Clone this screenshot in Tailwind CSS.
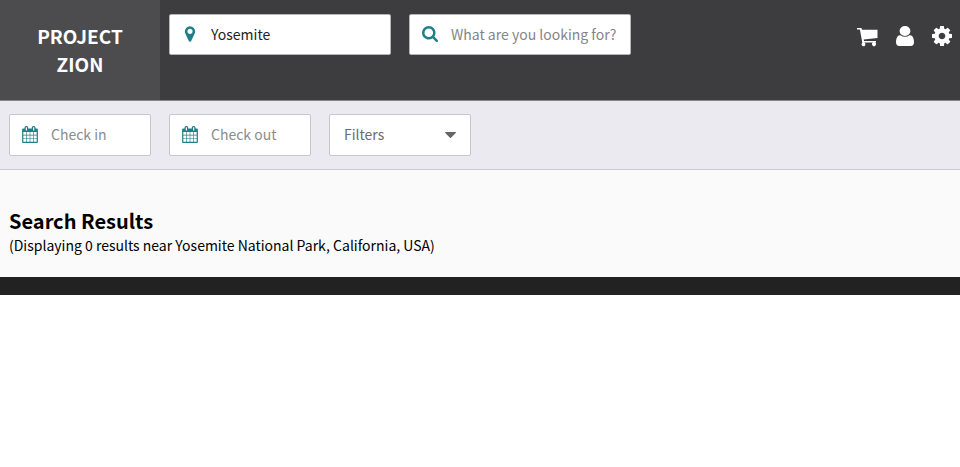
<!DOCTYPE html>
<html lang="en">
<head>
<meta charset="utf-8">
<meta name="viewport" content="width=device-width, initial-scale=1">
<title>Project Zion</title>
<script src="https://cdn.jsdelivr.net/npm/@tailwindcss/browser@4"></script>
</head>
<body class="bg-white font-['Noto_Sans_CJK_SC','Noto_Sans',sans-serif] text-[14px] leading-6 text-black">
<header class="flex h-[101px] border-b border-[#858587] bg-[#3d3d3f]">
  <a href="#" class="flex w-1/6 items-center justify-center bg-[#4c4c4e] px-8 text-center text-[19px] leading-7 font-bold text-white">PROJECT ZION</a>
  <form class="flex w-1/2 pt-[14px]">
    <label class="relative w-1/2 px-[9px]">
      <span class="sr-only">Location</span>
      <svg class="absolute top-[11px] left-[21px] size-[18px] fill-[#1f7f87]" viewBox="0 0 1792 1792"><path d="M1152 640q0-106-75-181t-181-75-181 75-75 181 75 181 181 75 181-75 75-181zm256 0q0 109-33 179l-364 774q-16 33-47.500 52t-67.500 19-67.500-19-46.500-52l-365-774q-33-70-33-179 0-212 150-362t362-150 362 150 150 362z"/></svg>
      <input type="text" value="Yosemite" class="block h-[41px] w-full rounded-xs border border-[#b5b5b9] bg-white pr-2 pb-[2px] pl-[41px] text-[#222]">
    </label>
    <label class="relative w-1/2 px-[9px]">
      <span class="sr-only">Search</span>
      <svg class="absolute top-3 left-[22px] size-4 fill-[#1f7f87]" viewBox="64 128 1664 1664"><path d="M1216 832q0-185-131.500-316.500t-316.500-131.500-316.500 131.500-131.500 316.500 131.500 316.500 316.500 131.500 316.500-131.500 131.500-316.500zm512 832q0 52-38 90t-90 38q-54 0-90-38l-343-342q-179 124-399 124-143 0-273.500-55.500t-225-150-150-225-55.500-273.500 55.500-273.500 150-225 225-150 273.500-55.500 273.500 55.500 225 150 150 225 55.500 273.500q0 220-124 399l343 343q37 37 37 90z"/></svg>
      <input type="text" placeholder="What are you looking for?" class="block h-[41px] w-full rounded-xs border border-[#b5b5b9] bg-white pr-2 pb-[2px] pl-[41px] placeholder:text-[#858585]">
    </label>
  </form>
  <nav class="flex flex-1 items-start justify-end gap-[18px] pt-[26px] pr-2">
    <button type="button" aria-label="Cart"><svg class="size-[22px] fill-white" viewBox="0 0 22 22"><path d="M1 2h4.400l.6 1.800h15.500v8.200L7.700 13.600l.4 1.400H20v1.600h-1.100a1.900 1.900 0 1 1-1.800 0H8.400a1.900 1.900 0 1 1-2.100.2L3.900 3.600H1z"/></svg></button>
    <button type="button" aria-label="Account"><svg class="h-5 w-[18px] fill-white" viewBox="256 128 1280 1536" preserveAspectRatio="none"><path d="M1536 1399q0 109-62.500 187t-150.500 78h-854q-88 0-150.500-78t-62.500-187q0-85 8.500-160.500t31.500-152 58.500-131 94-89 134.500-34.500q131 128 313 128t313-128q76 0 134.500 34.500t94 89 58.500 131 31.500 152 8.500 160.500zm-256-887q0 159-112.500 271.500t-271.500 112.500-271.500-112.500-112.500-271.500 112.500-271.500 271.500-112.500 271.500 112.500 112.500 271.500z"/></svg></button>
    <button type="button" aria-label="Settings"><svg class="size-5 fill-white" viewBox="128 128 1536 1536"><path d="M1152 896q0-106-75-181t-181-75-181 75-75 181 75 181 181 75 181-75 75-181zm512-109v222q0 12-8 23t-20 13l-185 28q-19 54-39 91 35 50 107 138 10 12 10 25t-9 23q-27 37-99 108t-94 71q-12 0-26-9l-138-108q-44 23-91 38-16 136-29 186-7 28-36 28h-222q-14 0-24.500-8.500t-11.500-21.500l-28-184q-49-16-90-37l-141 107q-10 9-25 9-14 0-25-11-126-114-165-168-7-10-7-23 0-12 8-23 15-21 51-66.500t54-70.500q-27-50-41-99l-183-27q-13-2-21-12.500t-8-23.500v-222q0-12 8-23t19-13l186-28q14-46 39-92-40-57-107-138-10-12-10-24 0-10 9-23 26-36 98.500-107.500t94.500-71.500q13 0 26 10l138 107q44-23 91-38 16-136 29-186 7-28 36-28h222q14 0 24.500 8.500t11.500 21.500l28 184q49 16 90 37l142-107q9-9 24-9 13 0 25 10 129 119 165 170 7 8 7 22 0 12-8 23-15 21-51 66.500t-54 70.500q26 50 41 98l183 28q13 2 21 12.500t8 23.500z"/></svg></button>
  </nav>
</header>
<form class="flex border-b border-[#cbcbd0] bg-[#ebeaf0] py-[13px]">
  <svg class="hidden"><symbol id="calendar" viewBox="64 0 1664 1792"><path d="M192 1664h288v-288h-288v288zm352 0h320v-288h-320v288zm-352-352h288v-320h-288v320zm352 0h320v-320h-320v320zm-352-384h288v-288h-288v288zm736 736h320v-288h-320v288zm-384-736h320v-288h-320v288zm768 736h288v-288h-288v288zm-384-352h320v-320h-320v320zm-352-864v-288q0-13-9.500-22.500t-22.500-9.500h-64q-13 0-22.500 9.500t-9.500 22.500v288q0 13 9.500 22.500t22.500 9.500h64q13 0 22.500-9.500t9.500-22.500zm736 864h288v-320h-288v320zm-384-384h320v-288h-320v288zm384 0h288v-288h-288v288zm32-480v-288q0-13-9.500-22.500t-22.500-9.500h-64q-13 0-22.500 9.500t-9.500 22.500v288q0 13 9.500 22.500t22.500 9.500h64q13 0 22.500-9.500t9.500-22.500zm384-64v1280q0 52-38 90t-90 38h-1408q-52 0-90-38t-38-90v-1280q0-52 38-90t90-38h128v-96q0-66 47-113t113-47h64q66 0 113 47t47 113v96h384v-96q0-66 47-113t113-47h64q66 0 113 47t47 113v96h128q52 0 90 38t38 90z"/></symbol></svg>
  <label class="relative w-1/6 px-[9px]">
    <span class="sr-only">Check in</span>
    <svg class="absolute top-3 left-[22px] h-[17px] w-4 fill-[#1f7f87]"><use href="#calendar"/></svg>
    <input type="text" placeholder="Check in" class="block h-[42px] w-full rounded-xs border border-[#c6c6cd] bg-white pr-2 pb-[2px] pl-[41px] placeholder:text-[#8c8c8c]">
  </label>
  <label class="relative w-1/6 px-[9px]">
    <span class="sr-only">Check out</span>
    <svg class="absolute top-3 left-[22px] h-[17px] w-4 fill-[#1f7f87]"><use href="#calendar"/></svg>
    <input type="text" placeholder="Check out" class="block h-[42px] w-full rounded-xs border border-[#c6c6cd] bg-white pr-2 pb-[2px] pl-[41px] placeholder:text-[#8c8c8c]">
  </label>
  <label class="relative w-1/6 px-[9px]">
    <span class="sr-only">Filters</span>
    <select class="block h-[42px] w-full appearance-none rounded-xs border border-[#c6c6cd] bg-white pr-8 pb-[2px] pl-[14px] text-[#6c6c6c]"><option>Filters</option></select>
    <svg class="pointer-events-none absolute top-[18px] right-6 h-[6px] w-[11px] fill-[#666]" viewBox="0 0 11 6"><path d="M.5 0h10q.8.300.2 1L6 5.700q-.5.400-1 0L.3 1Q-.3.300.5 0z"/></svg>
  </label>
</form>
<main class="bg-[#fafafa] px-[9px] pt-[38px] pb-5">
  <h1 class="text-[20px] leading-[26px] font-bold">Search Results</h1>
  <p class="leading-[23px]">(Displaying 0 results near Yosemite National Park, California, USA)</p>
</main>
<footer class="h-[18px] bg-[#222]"></footer>
</body>
</html>
